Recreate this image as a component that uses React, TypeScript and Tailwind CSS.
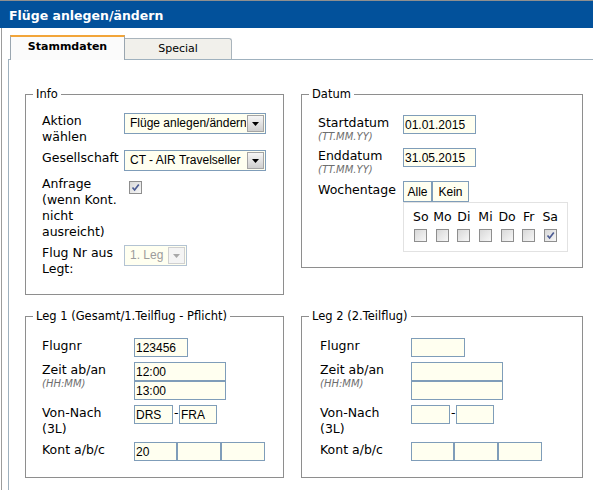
import React from 'react';

const label = "text-[12.5px] leading-[16px] text-black";
const hint = "text-[10px] leading-[12px] italic text-[#6e6e6e]";
const field = "h-[19px] border border-[#7f9db9] bg-[#fffff0] px-[1px] text-[12px] text-black outline-none font-['Liberation_Sans',Arial,sans-serif]";

function Field({ value = '', w, h = 'h-[19px]' }: { value?: string; w: string; h?: string }) {
    return <input readOnly defaultValue={value} className={`${field} ${w} ${h}`} />;
}

function Select({ value, w, disabled = false }: { value: string; w: string; disabled?: boolean }) {
    return (
        <div className={`flex h-[21px] items-stretch border bg-[#fffff0] ${w} ${disabled ? 'border-[#b3c3d3]' : 'border-[#7f9db9]'}`}>
            <span className={`flex-1 overflow-hidden whitespace-nowrap pl-[5px] text-[12px] leading-[19px] font-['Liberation_Sans',Arial,sans-serif] ${disabled ? 'text-[#9c9c9c]' : 'text-black'}`}>
                {value}
            </span>
            <span className={`m-px flex w-[17px] items-center justify-center border ${disabled ? 'border-[#d0d0d0] bg-[#f4f4f4]' : 'border-[#a4a4a4] bg-gradient-to-b from-[#f6f6f6] to-[#cfcfcf]'}`}>
                <svg width="7" height="4" viewBox="0 0 7 4">
                    <polygon points="0,0 7,0 3.5,4" fill={disabled ? '#a8a8a8' : '#000'} />
                </svg>
            </span>
        </div>
    );
}

function Check({ checked = false }: { checked?: boolean }) {
    return (
        <span className="flex h-[13px] w-[13px] items-center justify-center border border-[#8e8e8e] bg-gradient-to-br from-[#d8d8d8] to-[#f7f7f7]">
            {checked && (
                <svg width="9" height="9" viewBox="0 0 9 9">
                    <path d="M1.5 4.5 L3.6 7 L7.8 1.6" stroke="#4b5b93" strokeWidth="1.7" fill="none" />
                </svg>
            )}
        </span>
    );
}

// fieldset with the padding on an inner div, so the legend stays near the left corner
function Box({ legend, className, inner, children }: { legend: string; className: string; inner: string; children: React.ReactNode }) {
    return (
        <fieldset className={`border border-[#8e8e8e] ${className}`}>
            <legend className="ml-[7px] px-[3px] text-[11.5px] leading-[14px] text-black">{legend}</legend>
            <div className={inner}>{children}</div>
        </fieldset>
    );
}

function Leg({ legend, pl, col, values }: { legend: string; pl: string; col: string; values: string[] }) {
    return (
        <Box legend={legend} className="h-[169px]" inner={`${pl} pt-[15px]`}>
            <div className={`grid ${col} items-start gap-y-[5px]`}>
                <div className={label}>Flugnr</div>
                <Field value={values[0]} w="w-[54px]" h="h-[18px]" />

                <div>
                    <div className={label}>Zeit ab/an</div>
                    <div className={hint}>(HH:MM)</div>
                </div>
                <div className="flex flex-col">
                    <Field value={values[1]} w="w-[92px]" />
                    <Field value={values[2]} w="w-[92px]" />
                </div>

                <div className={label}>Von-Nach<br />(3L)</div>
                <div className="flex items-start">
                    <Field value={values[3]} w="w-[39px]" h="h-[18px]" />
                    <span className="w-[6px] pl-px text-[12.5px] leading-[16px]">-</span>
                    <Field value={values[4]} w="w-[38px]" h="h-[18px]" />
                </div>

                <div className={label}>Kont a/b/c</div>
                <div className="flex">
                    <Field value={values[5]} w="w-[43px]" h="h-[18px]" />
                    <Field w="w-[44px]" h="h-[18px]" />
                    <Field w="w-[44px]" h="h-[18px]" />
                </div>
            </div>
        </Box>
    );
}

export default function App() {
    const days = ['So', 'Mo', 'Di', 'Mi', 'Do', 'Fr', 'Sa'];

    return (
        <div className="flex h-[490px] w-[593px] flex-col overflow-hidden border-t border-[#8f8f8f] bg-white font-['DejaVu_Sans',Verdana,sans-serif]">
            {/* Header */}
            <div className="h-[27px] shrink-0 bg-[#02519b] pl-[9px] pt-px text-[12.5px] font-bold leading-[27px] text-white">
                Flüge anlegen/ändern
            </div>

            <div className="ml-px flex flex-1 flex-col border-l border-[#9c9c9c]">
                {/* Tabs */}
                <div className="flex h-[31px] shrink-0 items-end pl-[8px]">
                    <div className="relative z-10 -mb-px flex h-[25px] w-[115px] items-center justify-center border-x border-t-2 border-x-[#9aa6b0] border-t-[#f2a53a] bg-[#fbfbfb] pb-[3px] text-[11px] font-bold text-black">
                        Stammdaten
                    </div>
                    <div className="flex h-[21px] w-[107px] items-center justify-center rounded-tr-[3px] border-t border-r border-[#a9b4bc] bg-[#f1f0eb] text-[11px] text-black">
                        Special
                    </div>
                </div>

                {/* Panel */}
                <div className="ml-[6px] flex-1 border-l border-t border-[#9fb1be] pl-[16px] pt-[27px]">
                    <div className="flex items-start gap-[17px]">
                        <Box legend="Info" className="h-[208px] w-[259px]" inner="pl-[16px] pt-[12px]">
                            <div className="grid grid-cols-[82px_142px] items-start gap-y-[5px]">
                                <div className={label}>Aktion wählen</div>
                                <Select value="Flüge anlegen/ändern" w="w-[142px]" />

                                <div className={label}>Gesellschaft</div>
                                <Select value="CT - AIR Travelseller" w="w-[142px]" />

                                <div className={label}>Anfrage (wenn Kont. nicht ausreicht)</div>
                                <div className="pl-[5px] pt-[5px]">
                                    <Check checked />
                                </div>

                                <div className={label}>Flug Nr aus Legt:</div>
                                <Select value="1. Leg" w="w-[63px]" disabled />
                            </div>
                        </Box>

                        <Box legend="Datum" className="h-[181px] w-[282px]" inner="pl-[16px] pt-[14px]">
                            <div className="grid grid-cols-[85px_auto] items-start gap-y-[5px]">
                                <div>
                                    <div className={label}>Startdatum</div>
                                    <div className={hint}>(TT.MM.YY)</div>
                                </div>
                                <Field value="01.01.2015" w="w-[73px]" />

                                <div>
                                    <div className={label}>Enddatum</div>
                                    <div className={hint}>(TT.MM.YY)</div>
                                </div>
                                <Field value="31.05.2015" w="w-[73px]" />

                                <div className={`${label} pt-px`}>Wochentage</div>
                                <div>
                                    <div className="flex font-['Liberation_Sans',Arial,sans-serif] text-[12px]">
                                        <button className="h-[21px] w-[29px] border border-[#7f9db9] bg-[#fffff0]">Alle</button>
                                        <button className="h-[21px] w-[37px] border border-[#7f9db9] bg-[#fffff0]">Kein</button>
                                    </div>
                                    <div className="w-[165px] border border-[#e2e2e2] pb-[9px] pl-[6px] pt-[6px]">
                                        <div className="grid w-[151px] grid-cols-7">
                                            {days.map((d) => (
                                                <div key={d} className="flex flex-col items-center gap-[4px]">
                                                    <span className={label}>{d}</span>
                                                    <Check checked={d === 'Sa'} />
                                                </div>
                                            ))}
                                        </div>
                                    </div>
                                </div>
                            </div>
                        </Box>
                    </div>

                    <div className="mt-[14px] flex items-start gap-[17px]">
                        <div className="w-[259px]">
                            <Leg
                                legend="Leg 1 (Gesamt/1.Teilflug - Pflicht)"
                                pl="pl-[16px]"
                                col="grid-cols-[92px_auto]"
                                values={['123456', '12:00', '13:00', 'DRS', 'FRA', '20']}
                            />
                        </div>
                        <div className="w-[282px]">
                            <Leg
                                legend="Leg 2 (2.Teilflug)"
                                pl="pl-[18px]"
                                col="grid-cols-[91px_auto]"
                                values={['', '', '', '', '', '']}
                            />
                        </div>
                    </div>
                </div>
            </div>
        </div>
    );
}
